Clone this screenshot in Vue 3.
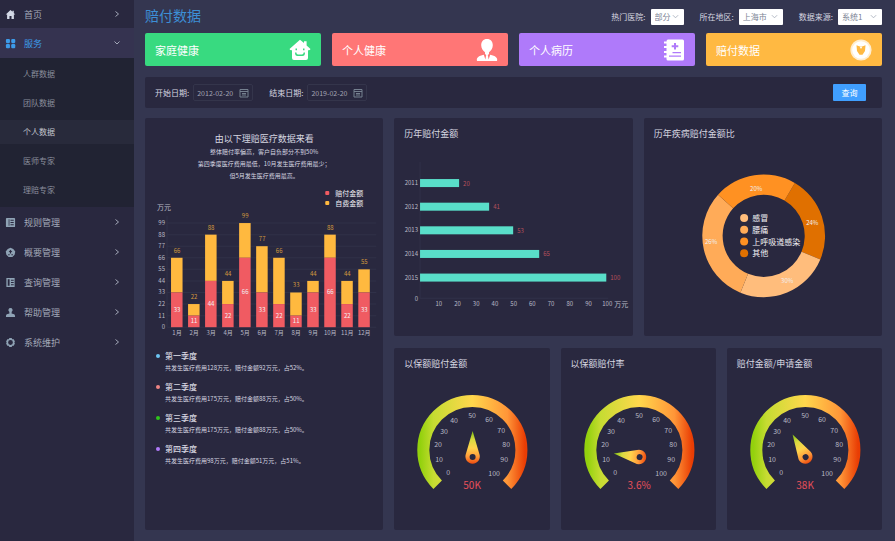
<script setup>
import { ref } from 'vue'

const subItems = ['人群数据', '团队数据', '个人数据', '医师专家', '理赔专家']
const menu = [
  { name: '规则管理', icon: 'book' },
  { name: '概要管理', icon: 'chart' },
  { name: '查询管理', icon: 'list' },
  { name: '帮助管理', icon: 'user' },
  { name: '系统维护', icon: 'gear' }
]
const selects = [
  { id: 'hospital', label: '热门医院:', value: '部分', size: 'small' },
  { id: 'area', label: '所在地区:', value: '上海市', size: 'large' },
  { id: 'source', label: '数据来源:', value: '系统1', size: 'large' }
]
const cards = [
  { name: '家庭健康', tone: 'green' },
  { name: '个人健康', tone: 'red' },
  { name: '个人病历', tone: 'purple' },
  { name: '赔付数据', tone: 'orange' }
]
const startDate = ref('2012-02-20')
const endDate = ref('2019-02-20')

const months = [
  [66, 33], [22, 11], [88, 44], [44, 22], [99, 66], [77, 33],
  [66, 22], [33, 11], [44, 33], [88, 66], [44, 22], [55, 33]
].map(([total, paid], i) => ({ total, paid, x: 26 + i * 17, label: i + 1 + '月' }))
const ticks = [0, 11, 22, 33, 44, 55, 66, 77, 88, 99]
const yOf = (v) => 145 - (v * 104) / 99

const quarters = [
  { name: '第一季度', color: 'blue', text: '共发生医疗费用128万元，赔付金额92万元，占52%。' },
  { name: '第二季度', color: 'pink', text: '共发生医疗费用175万元，赔付金额88万元，占50%。' },
  { name: '第三季度', color: 'green', text: '共发生医疗费用175万元，赔付金额88万元，占50%。' },
  { name: '第四季度', color: 'purple', text: '共发生医疗费用98万元，赔付金额51万元，占51%。' }
]

const years = [
  { year: 2011, value: 20, w: 39 },
  { year: 2012, value: 41, w: 69 },
  { year: 2013, value: 53, w: 93 },
  { year: 2014, value: 65, w: 119 },
  { year: 2015, value: 100, w: 186 }
]

const point = (r, deg) => {
  const a = (deg * Math.PI) / 180
  return `${(119.5 + r * Math.sin(a)).toFixed(2)} ${(95.7 - r * Math.cos(a)).toFixed(2)}`
}
const ring = (from, to) =>
  `M${point(61.3, from)}A61.3 61.3 0 0 1 ${point(61.3, to)}L${point(41, to)}A41 41 0 0 0 ${point(41, from)}Z`
const slices = [
  { d: ring(30.5, 112.7), color: '#e07000', pct: '24%', x: 168, y: 85 },
  { d: ring(112.7, 202.3), color: '#ffbd7c', pct: '30%', x: 143, y: 143 },
  { d: ring(202.3, 312), color: '#ffab58', pct: '26%', x: 67, y: 104 },
  { d: ring(312, 390.5), color: '#ff9122', pct: '20%', x: 112, y: 51 }
]
const illness = [
  { name: '感冒', color: '#ffbd7c' },
  { name: '腰痛', color: '#ffab58' },
  { name: '上呼吸道感染', color: '#ff9122' },
  { name: '其他', color: '#e07000' }
]

const gauges = [
  { title: '以保额赔付金额', value: '50K', angle: 0 },
  { title: '以保额赔付率', value: '3.6%', angle: -82 },
  { title: '赔付金额/申请金额', value: '38K', angle: -30 }
]
const marks = [
  [0, 54, 102], [10, 45, 89], [20, 44, 74], [30, 50, 61], [40, 60, 50], [50, 78, 45],
  [60, 95, 49], [70, 107, 60], [80, 112, 74], [90, 110, 89], [100, 100, 103]
]
</script>

<template>
  <div class="app">
    <nav class="side">
      <a class="item home" href="#">
        <svg class="ico light" viewBox="0 0 12 12"><path d="M6 1 .8 6h1.5v5h2.6V7.5h2.2V11h2.6V6h1.5L9.6 4.400V1.800H8.200V3Z" /></svg>
        <span>首页</span>
        <svg class="arrow" viewBox="0 0 8 8"><path d="M2.500 1.500 5.500 4 2.500 6.500" /></svg>
      </a>
      <button class="item active" type="button">
        <svg class="ico" viewBox="0 0 12 12"><rect x="1" y="1" width="4.400" height="4.600" rx="1.200" /><rect x="6.800" y="1" width="4.400" height="4.600" rx="1.200" /><rect x="1" y="6.600" width="4.400" height="4.600" rx="1.200" /><rect x="6.800" y="6.600" width="4.400" height="4.600" rx="1.200" /></svg>
        <span>服务</span>
        <svg class="arrow" viewBox="0 0 8 8"><path d="M1.500 2.500 4 5 6.500 2.500" /></svg>
      </button>
      <div class="sub">
        <a v-for="s in subItems" :key="s" href="#" :class="{ on: s === '个人数据' }">{{ s }}</a>
      </div>
      <a v-for="m in menu" :key="m.name" class="item" href="#">
        <svg class="ico" viewBox="0 0 12 12">
          <path v-if="m.icon === 'book'" fill-rule="evenodd" d="M2 1h8q1 0 1 1v8q0 1-1 1H2q-1 0-1-1V2q0-1 1-1ZM4 2.500v7h.8v-7ZM6 3v1h3.500V3ZM6 5.500v1h3.500v-1ZM6 8v1h3.500V8Z" />
          <path v-else-if="m.icon === 'chart'" fill-rule="evenodd" d="M6 .8 9 2.200 11.200 5 10.500 8.500 8 11H4L1.500 8.500.8 5 3 2.200ZM6 3 4 5.500h1.300V7h1.400V5.500H8ZM3.500 8v1h1.600V8ZM7 8v1h1.600V8Z" />
          <path v-else-if="m.icon === 'list'" fill-rule="evenodd" d="M1.500 1h9v10h-9ZM3 2.500v7h2v-7ZM6.500 3v1h3V3ZM6.500 5.500v1h3v-1ZM6.500 8v1h3V8Z" />
          <path v-else-if="m.icon === 'user'" d="M6 1a2.300 2.300 0 0 1 1.300 4.200L7.200 7 10 8q1 .5 1 2.800H1Q1 8.500 2 8l2.800-1-.1-1.800A2.300 2.300 0 0 1 6 1Z" />
          <path v-else fill-rule="evenodd" d="M4.800 1.200h2.400L8 2.400l1.500.1L10.800 5l-.6 1 .6 1-1.300 2.500-1.500.1-.8 1.200H4.800L4 9.600l-1.500-.1L1.200 7l.6-1-.6-1 1.300-2.500L4 2.400ZM6 3.400a2.600 2.600 0 1 0 0 5.200 2.600 2.600 0 0 0 0-5.200Z" />
        </svg>
        <span>{{ m.name }}</span>
        <svg class="arrow" viewBox="0 0 8 8"><path d="M2.500 1.500 5.500 4 2.500 6.500" /></svg>
      </a>
    </nav>

    <main class="main">
      <header class="top">
        <h1>赔付数据</h1>
        <div v-for="s in selects" :key="s.id" class="field">
          <label :for="s.id">{{ s.label }}</label>
          <div class="pick" :class="s.size">
            <select :id="s.id"><option>{{ s.value }}</option></select>
            <svg viewBox="0 0 8 8"><path d="M1 2.500 4 5.500 7 2.500" /></svg>
          </div>
        </div>
      </header>

      <section class="cards">
        <a v-for="c in cards" :key="c.name" href="#" class="card" :class="c.tone">
          <span>{{ c.name }}</span>
          <svg viewBox="0 0 22 22">
            <path v-if="c.tone === 'green'" fill-rule="evenodd" d="M11 .8 15 4V2.200h2.600V6.500L21.500 10q-.5 1.500-2.500 1.200V19q0 2-2 2H5q-2 0-2-2v-7.800Q1 11.500.5 10ZM6.500 9.500v1.800H8V9.500ZM14 9.500v1.800h1.500V9.500ZM6 13.500q0 3.500 2.500 3.500h5q2.500 0 2.500-3.500h-1.400q0 2-1.600 2H9q-1.600 0-1.600-2Z" />
            <path v-else-if="c.tone === 'red'" d="M11 0c3.800 0 5.800 2.600 5.800 6.200 0 3.300-2 5.600-3.800 7v1.900l-1.200.9.8 4.500 1.600-4.800q6 1.300 6.800 3.800.8 3-1.500 3h-17Q.2 22.500 1 19.500q.8-2.500 6.800-3.800l1.600 4.800.8-4.500L9 15.100v-1.900c-1.800-1.400-3.800-3.700-3.800-7C5.200 2.600 7.200 0 11 0Z" />
            <path v-else-if="c.tone === 'purple'" fill-rule="evenodd" d="M5 .5h14.500q1.500 0 1.500 1.500v18q0 1.500-1.500 1.500H5q-1.500 0-1.500-1.500v-1.500H1v-2h2.500V14H1v-2h2.500V9H1V7h2.500V4.500H1v-2h2.500Q3.500.5 5 .5ZM11 4v2.300H8.700v2H11v2.300h2V8.300h2.300v-2H13V4ZM9.500 13v1.200H18V13ZM6 16.500v1.200h12v-1.200Z" />
            <g v-else>
              <circle cx="11" cy="11" r="10.600" opacity=".75" />
              <circle cx="11" cy="11" r="8.800" />
              <path class="notch" d="M6.500 6.200 9.200 7.200h3.600l2.700-1-.5 5.800-2.500 3.800h-3L7 12Z" />
              <path d="M9.600 7.400h2.800L11 10Z" />
            </g>
          </svg>
        </a>
      </section>

      <form class="filter" @submit.prevent>
        <label for="start">开始日期:</label>
        <div class="date">
          <input id="start" v-model="startDate" type="text" />
          <svg viewBox="0 0 10 10"><path d="M1 1.500h8v7.500H1ZM1 3.500h8M3 5.500h4M3 7h4" /></svg>
        </div>
        <label for="end">结束日期:</label>
        <div class="date">
          <input id="end" v-model="endDate" type="text" />
          <svg viewBox="0 0 10 10"><path d="M1 1.500h8v7.500H1ZM1 3.500h8M3 5.500h4M3 7h4" /></svg>
        </div>
        <button type="submit">查询</button>
      </form>

      <div class="dash">
        <section class="panel">
          <h2 class="lead">由以下理赔医疗数据来看</h2>
          <p class="note">整体赔付率偏高，客户自负部分不到50%</p>
          <p class="note">第四季度医疗费用最低，10月发生医疗费用最少；</p>
          <p class="note">但5月发生医疗费用最高。</p>
          <svg class="chart" viewBox="0 0 238 160">
            <rect x="180" y="9" width="4" height="4" rx="1" fill="#f05b62" />
            <text class="s7 white" x="190" y="14">赔付金额</text>
            <rect x="180" y="19" width="4" height="4" rx="1" fill="#ffb93f" />
            <text class="s7 white" x="190" y="24">自费金额</text>
            <text class="s7 dim" x="12" y="28">万元</text>
            <g v-for="t in ticks" :key="t">
              <line x1="22" x2="231" :y1="yOf(t)" :y2="yOf(t)" stroke="#303149" />
              <text class="s6 dim end" x="20" :y="yOf(t) + 2">{{ t }}</text>
            </g>
            <line x1="22" x2="22" y1="34" y2="145" stroke="#303149" />
            <g v-for="m in months" :key="m.label">
              <rect :x="m.x" :y="yOf(m.total)" width="11.500" :height="yOf(m.paid) - yOf(m.total)" fill="#ffb93f" />
              <rect :x="m.x" :y="yOf(m.paid)" width="11.500" :height="145 - yOf(m.paid)" fill="#f05b62" />
              <text class="s6 gold mid" :x="m.x + 6" :y="yOf(m.total) - 5">{{ m.total }}</text>
              <text class="s6 white mid" :x="m.x + 6" :y="(yOf(m.paid) + 145) / 2 + 2">{{ m.paid }}</text>
              <text class="s6 dim mid" :x="m.x + 6" y="153">{{ m.label }}</text>
            </g>
          </svg>
          <ul class="quarters">
            <li v-for="q in quarters" :key="q.name" :class="q.color">
              <h3>{{ q.name }}</h3>
              <p>{{ q.text }}</p>
            </li>
          </ul>
        </section>

        <div class="right">
          <div class="pair">
            <section class="panel">
              <h2>历年赔付金额</h2>
              <svg class="chart" viewBox="0 0 238 190">
                <path d="M26 22V158H214" fill="none" stroke="#303149" />
                <g v-for="(y, i) in years" :key="y.year">
                  <text class="s6 dim end" x="24" :y="45 + i * 23.600">{{ y.year }}</text>
                  <rect x="26" :y="39 + i * 23.600" :width="y.w" height="8" fill="#59dec9" />
                  <text class="s6 rose" :x="y.w + 30" :y="45.500 + i * 23.600">{{ y.value }}</text>
                </g>
                <text class="s6 dim end" x="24" y="161">0</text>
                <text v-for="n in 10" :key="n" class="s6 dim mid" :x="26 + n * 18.700" y="166">{{ n * 10 }}</text>
                <text class="s7 dim" x="220" y="167">万元</text>
              </svg>
            </section>
            <section class="panel">
              <h2>历年疾病赔付金额比</h2>
              <svg class="chart" viewBox="0 0 238 190">
                <g v-for="s in slices" :key="s.pct">
                  <path :d="s.d" :fill="s.color" />
                  <text class="s6 white mid" :x="s.x" :y="s.y">{{ s.pct }}</text>
                </g>
                <g v-for="(n, i) in illness" :key="n.name">
                  <circle cx="100" :cy="78 + i * 11.700" r="4" :fill="n.color" />
                  <text class="s8 white" x="108" :y="81 + i * 11.700">{{ n.name }}</text>
                </g>
              </svg>
            </section>
          </div>

          <div class="trio">
            <section v-for="(g, i) in gauges" :key="g.title" class="panel">
              <h2>{{ g.title }}</h2>
              <svg class="chart" viewBox="0 0 155 150">
                <defs>
                  <linearGradient :id="'arc' + i" gradientUnits="userSpaceOnUse" x1="23" x2="133" y1="0" y2="0">
                    <stop offset="0.030" stop-color="#93d10d" />
                    <stop offset="0.150" stop-color="#c6dc32" />
                    <stop offset="0.500" stop-color="#ffd74d" />
                    <stop offset="0.820" stop-color="#ff9638" />
                    <stop offset="0.980" stop-color="#e93d04" />
                  </linearGradient>
                  <linearGradient :id="'needle' + i" gradientUnits="userSpaceOnUse" x1="0" x2="0" y1="-26" y2="8">
                    <stop offset="0" stop-color="#7cbf10" />
                    <stop offset="0.250" stop-color="#d8da40" />
                    <stop offset="0.500" stop-color="#ffd34c" />
                    <stop offset="0.750" stop-color="#ff9a3a" />
                    <stop offset="1" stop-color="#ea3c06" />
                  </linearGradient>
                </defs>
                <path d="M43.600 114.600A49 49 0 1 1 112.900 114.600" fill="none" :stroke="`url(#arc${i})`" stroke-width="12" />
                <text v-for="m in marks" :key="m[0]" class="s7 dim mid" :x="m[1]" :y="m[2] + 3">{{ m[0] }}</text>
                <g :transform="`translate(78.500 87) rotate(${g.angle})`">
                  <path d="M0-26 6.600-3.500A7.200 7.200 0 1 1-6.600-3.500Z" :fill="`url(#needle${i})`" />
                  <circle r="3" fill="#29283f" />
                </g>
                <text class="s10 red mid" x="78" y="119">{{ g.value }}</text>
              </svg>
            </section>
          </div>
        </div>
      </div>
    </main>
  </div>
</template>

<style>
body {
  background: #343650;
}
</style>

<style scoped>
.app {
  display: flex;
  min-height: 100vh;
  background: #343650;
  color: #d6d6e0;
  font-family: "Noto Sans CJK SC", "Noto Sans", sans-serif;
}
.app * {
  box-sizing: border-box;
}
h1, h2, h3, p, ul {
  margin: 0;
  padding: 0;
}
a {
  color: inherit;
  text-decoration: none;
}
button, input, select {
  font-family: inherit;
  margin: 0;
  border: 0;
}

.side {
  flex: 0 0 134px;
  background: #29283f;
}
.item {
  display: flex;
  align-items: center;
  width: 100%;
  height: 30px;
  padding: 0 13px 0 5px;
  background: none;
  color: #a3a8b8;
  font-size: 9px;
  text-align: left;
}
.item.home {
  height: 28px;
}
.item.active {
  background: #353350;
  color: #3d9be9;
}
.item span {
  flex: 1;
  margin-left: 8px;
}
.ico {
  width: 11px;
  height: 11px;
  fill: #8fa3b5;
}
.ico.light {
  fill: #d3d9e6;
}
.active .ico {
  fill: #3d9be9;
}
.arrow {
  width: 8px;
  height: 8px;
  fill: none;
  stroke: #a3a8b8;
}
.sub {
  display: flex;
  flex-direction: column;
  gap: 5px;
  padding: 4px 0 5px;
  background: #212333;
  color: #8a8e9c;
  font-size: 8px;
}
.sub a {
  height: 24px;
  padding-left: 23px;
  line-height: 24px;
}
.sub a.on {
  background: #282a3b;
  color: #c4c7d0;
}

.main {
  display: flex;
  flex: 1;
  flex-direction: column;
  min-width: 0;
  padding: 0 13px 11px 11px;
}
.top {
  display: flex;
  align-items: center;
  gap: 16px;
  height: 33px;
}
h1 {
  margin-right: auto;
  color: #3d8fd6;
  font-size: 14px;
  font-weight: 400;
  line-height: 20px;
  padding-bottom: 3px;
}
.field {
  display: flex;
  align-items: center;
  gap: 5px;
  font-size: 8px;
}
.pick {
  position: relative;
  height: 16px;
}
.pick select {
  appearance: none;
  display: block;
  width: 100%;
  height: 100%;
  padding: 0 0 0 4px;
  border-radius: 1px;
  background: #fff;
  color: #7b8394;
  font-size: 8px;
}
.pick svg {
  position: absolute;
  top: 4px;
  right: 5px;
  width: 7px;
  height: 7px;
  fill: none;
  stroke: #a9b0bd;
  pointer-events: none;
}
.small {
  width: 33px;
}
.large {
  width: 44px;
}

.cards {
  display: grid;
  grid-template-columns: repeat(4, 1fr);
  gap: 11px;
}
.card {
  display: flex;
  align-items: center;
  justify-content: space-between;
  height: 33px;
  padding: 0 10px;
  border-radius: 2px;
  color: #fff;
  font-size: 11px;
}
.card svg {
  width: 22px;
  height: 22px;
  fill: #fff;
}
.card .notch {
  fill: #ffb942;
}
.green.card { background: #38da80; }
.red.card { background: #ff7676; }
.purple.card { background: #af7afa; }
.orange.card { background: #ffb942; }

.filter {
  display: flex;
  align-items: center;
  height: 31px;
  margin: 11px 0 10px;
  padding: 0 16px 0 10px;
  border-radius: 2px;
  background: #29283f;
  font-size: 8px;
}
.date {
  display: flex;
  align-items: center;
  width: 60px;
  height: 17px;
  margin: 0 16px 0 4px;
  padding: 0 3px;
  border: 1px solid #34354b;
  border-radius: 2px;
}
.date input {
  flex: 1;
  min-width: 0;
  padding: 0;
  background: none;
  color: #a4a6b4;
  font-size: 7px;
}
.date svg {
  width: 10px;
  height: 10px;
  fill: none;
  stroke: #75808f;
}
.filter button {
  width: 33px;
  height: 17px;
  margin-left: auto;
  padding: 0;
  border-radius: 1px;
  background: #409fff;
  color: #fff;
  font-size: 8px;
}

.dash {
  display: grid;
  flex: 1;
  grid-template-columns: repeat(3, minmax(0, 1fr));
  gap: 11px;
}
.right {
  display: grid;
  grid-column: span 2;
  grid-template-rows: 6fr 5fr;
  gap: 12px;
}
.pair, .trio {
  display: grid;
  grid-template-columns: repeat(2, minmax(0, 1fr));
  gap: 11px;
}
.trio {
  grid-template-columns: repeat(3, minmax(0, 1fr));
}
.panel {
  border-radius: 2px;
  background: #29283f;
}
.panel h2 {
  padding: 9px 10px 0;
  font-size: 9px;
  font-weight: 400;
  line-height: 13px;
}
.panel h2.lead {
  padding: 14px 0 0;
  line-height: 14px;
  text-align: center;
}
.note {
  font-size: 6px;
  line-height: 12px;
  text-align: center;
}
.chart {
  display: block;
  width: 100%;
}
.s6 { font-size: 6px; }
.s7 { font-size: 7px; }
.s8 { font-size: 8px; }
.s10 { font-size: 10px; }
.mid { text-anchor: middle; }
.end { text-anchor: end; }
.white { fill: #f1f0f4; }
.dim { fill: #b9bac6; }
.gold { fill: #d39a3e; }
.rose { fill: #b6505c; }
.red { fill: #e64f5a; }

.quarters {
  display: flex;
  flex-direction: column;
  gap: 6px;
  padding: 7px 10px 0 20px;
  list-style: none;
}
.quarters h3 {
  font-size: 8px;
  font-weight: 500;
  line-height: 13px;
}
.quarters h3::before {
  content: "";
  float: left;
  width: 4px;
  height: 4px;
  margin: 5px 0 0 -9px;
  border-radius: 50%;
  background: currentColor;
}
.quarters p {
  font-size: 6px;
  line-height: 12px;
}
.blue h3::before { background: #6cc5f2; }
.pink h3::before { background: #ef8585; }
.green h3::before { background: #2fc41c; }
.purple h3::before { background: #b07afa; }
</style>
